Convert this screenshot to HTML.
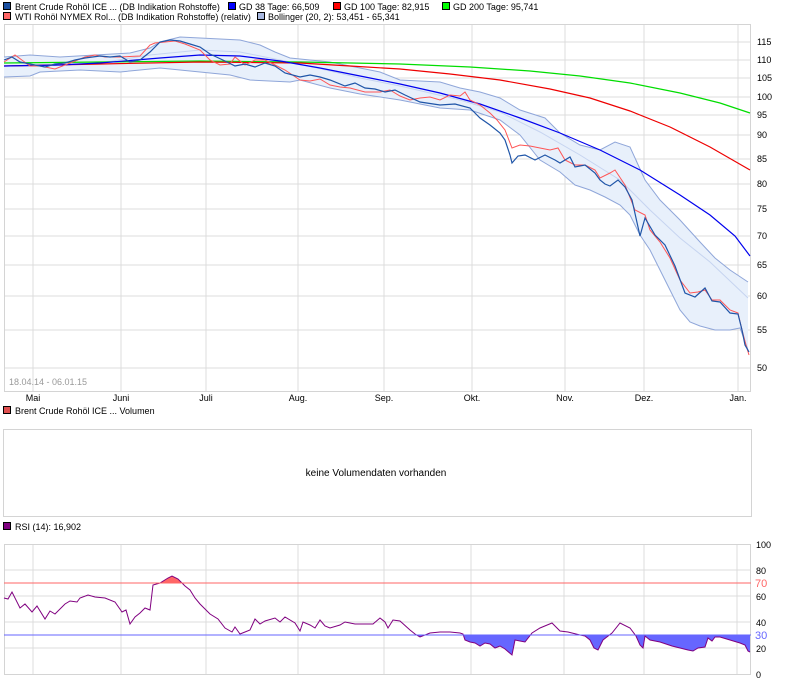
<!DOCTYPE html>
<html><head><meta charset="utf-8"><style>
body{margin:0;background:#fff;width:792px;height:684px;overflow:hidden;font-family:"Liberation Sans",sans-serif}
svg{position:absolute;left:0;top:0}
text{font-family:"Liberation Sans",sans-serif;font-size:9px;fill:#000}
</style></head><body>
<svg width="792" height="684" viewBox="0 0 792 684">
<defs>
<clipPath id="below30"><rect x="0" y="635" width="751" height="40"/></clipPath>
<clipPath id="above70"><rect x="0" y="540" width="751" height="43"/></clipPath>
</defs>
<rect x="3.5" y="2.5" width="7" height="7" fill="#1a4fa0" stroke="#000" stroke-width="1"/>
<text x="15" y="10">Brent Crude Rohöl ICE ... (DB Indikation Rohstoffe)</text>
<rect x="228.5" y="2.5" width="7" height="7" fill="#0000ff" stroke="#000"/>
<text x="239" y="10">GD 38 Tage: 66,509</text>
<rect x="333.5" y="2.5" width="7" height="7" fill="#ff0000" stroke="#000"/>
<text x="344" y="10">GD 100 Tage: 82,915</text>
<rect x="442.5" y="2.5" width="7" height="7" fill="#00ff00" stroke="#000"/>
<text x="453" y="10">GD 200 Tage: 95,741</text>
<rect x="3.5" y="12.5" width="7" height="7" fill="#ff6666" stroke="#000"/>
<text x="15" y="20">WTI Rohöl NYMEX Rol... (DB Indikation Rohstoffe) (relativ)</text>
<rect x="257.5" y="12.5" width="7" height="7" fill="#a8b8e0" stroke="#000"/>
<text x="268" y="20">Bollinger (20, 2): 53,451 - 65,341</text>

<g stroke="#dcdcdc" stroke-width="1">
<line x1="4" y1="42" x2="751" y2="42"/><line x1="4" y1="60" x2="751" y2="60"/><line x1="4" y1="78" x2="751" y2="78"/><line x1="4" y1="97" x2="751" y2="97"/><line x1="4" y1="115" x2="751" y2="115"/><line x1="4" y1="135" x2="751" y2="135"/><line x1="4" y1="159" x2="751" y2="159"/><line x1="4" y1="184" x2="751" y2="184"/><line x1="4" y1="209" x2="751" y2="209"/><line x1="4" y1="236" x2="751" y2="236"/><line x1="4" y1="265" x2="751" y2="265"/><line x1="4" y1="296" x2="751" y2="296"/><line x1="4" y1="330" x2="751" y2="330"/><line x1="4" y1="368" x2="751" y2="368"/>
<line x1="33" y1="24" x2="33" y2="391"/><line x1="121" y1="24" x2="121" y2="391"/><line x1="206" y1="24" x2="206" y2="391"/><line x1="298" y1="24" x2="298" y2="391"/><line x1="384" y1="24" x2="384" y2="391"/><line x1="472" y1="24" x2="472" y2="391"/><line x1="565" y1="24" x2="565" y2="391"/><line x1="644" y1="24" x2="644" y2="391"/><line x1="738" y1="24" x2="738" y2="391"/>
</g>
<rect x="4.5" y="24.5" width="746" height="367" fill="none" stroke="#d4d4d4"/>
<polygon fill="#e8f0fb" stroke="none" points="4,57 30,55 60,57 130,53 150,48 160,42 180,37 200,38 240,40 260,45 275,52 290,58 330,62 360,68 380,72 400,80 440,82 460,88 480,92 500,98 520,110 545,118 560,133 580,145 600,150 615,142 630,147 645,180 660,200 680,220 700,242 715,258 730,270 748,282 748,350 740,328 730,330 715,330 700,326 690,322 680,310 670,290 660,270 650,250 640,235 630,215 620,205 605,197 590,190 575,185 560,172 540,160 520,135 500,120 470,110 440,108 400,100 360,94 330,88 300,80 290,82 250,80 230,75 180,70 160,68 140,70 120,72 80,70 40,72 30,76 4,77"/>
<polyline fill="none" stroke="#8fa6d9" stroke-width="1" points="4,57 30,55 60,57 130,53 150,48 160,42 180,37 200,38 240,40 260,45 275,52 290,58 330,62 360,68 380,72 400,80 440,82 460,88 480,92 500,98 520,110 545,118 560,133 580,145 600,150 615,142 630,147 645,180 660,200 680,220 700,242 715,258 730,270 748,282"/>
<polyline fill="none" stroke="#8fa6d9" stroke-width="1" points="748,350 740,328 730,330 715,330 700,326 690,322 680,310 670,290 660,270 650,250 640,235 630,215 620,205 605,197 590,190 575,185 560,172 540,160 520,135 500,120 470,110 440,108 400,100 360,94 330,88 300,80 290,82 250,80 230,75 180,70 160,68 140,70 120,72 80,70 40,72 30,76 4,77"/>
<polyline fill="none" stroke="#c6d4f0" stroke-width="1" points="4,66 100,63 150,55 200,50 240,52 300,64 360,78 400,86 460,100 500,112 540,132 580,155 620,180 650,210 680,238 710,262 748,298"/>
<polyline fill="none" stroke="#00dd00" stroke-width="1.2" points="4,63 100,62 200,61 300,62 400,64 470,67 530,71 580,76 630,83 680,93 720,103 750,113"/>
<polyline fill="none" stroke="#ee0000" stroke-width="1.2" points="4,66 100,64 200,62 300,63 350,66 400,69 450,74 500,80 550,89 590,98 630,111 670,127 710,147 750,170"/>
<polyline fill="none" stroke="#0000ee" stroke-width="1.2" points="4,66 60,65 100,63 160,58 200,55 240,56 280,61 320,68 360,76 400,84 440,93 480,104 520,118 560,133 600,150 640,170 680,195 710,215 735,236 750,256"/>
<polyline fill="none" stroke="#ff5555" stroke-width="1" points="4,62 15,55 30,66 40,66 55,69 70,63 85,57 95,55 105,57 120,57 140,56 150,45 155,43 175,41 185,44 200,50 210,60 220,65 230,64 235,57 245,65 255,60 265,60 275,65 285,70 300,80 310,81 320,79 330,85 340,87 350,88 365,92 380,92 390,90 400,96 410,100 420,98 430,97 440,100 450,95 460,96 465,92 470,100 480,105 490,113 497,120 505,130 512,148 520,145 530,146 540,148 550,150 558,148 565,160 575,165 585,165 595,170 600,178 610,173 615,170 625,185 635,210 645,215 650,230 660,242 670,258 680,280 690,293 698,292 705,290 712,300 720,300 730,310 738,313 742,330 746,345 749,355"/>
<polyline fill="none" stroke="#1f55a8" stroke-width="1.2" points="4,60 12,57 20,62 35,65 45,67 55,64 65,63 75,60 85,58 100,56 110,57 120,56 130,62 140,60 150,52 160,42 170,40 180,41 190,44 200,47 210,54 225,61 235,66 245,64 255,67 265,63 275,66 285,73 300,77 310,75 320,77 330,80 345,86 355,83 365,88 375,89 385,92 395,90 405,95 420,102 440,105 455,104 470,108 480,118 490,125 500,133 505,140 510,155 512,163 518,156 525,155 535,160 545,155 555,160 560,163 570,157 575,167 585,165 595,173 600,180 605,184 610,186 618,180 625,187 632,200 640,236 645,218 655,235 665,245 675,266 685,293 695,297 705,288 712,301 720,302 730,313 738,314 742,330 745,345 749,352"/>
<text x="757" y="45">115</text><text x="757" y="63">110</text><text x="757" y="81">105</text><text x="757" y="100">100</text><text x="757" y="118">95</text><text x="757" y="138">90</text><text x="757" y="162">85</text><text x="757" y="187">80</text><text x="757" y="212">75</text><text x="757" y="239">70</text><text x="757" y="268">65</text><text x="757" y="299">60</text><text x="757" y="333">55</text><text x="757" y="371">50</text>
<text x="9" y="385" style="fill:#999">18.04.14 - 06.01.15</text>
<g text-anchor="middle"><text x="33" y="401">Mai</text><text x="121" y="401">Juni</text><text x="206" y="401">Juli</text><text x="298" y="401">Aug.</text><text x="384" y="401">Sep.</text><text x="472" y="401">Okt.</text><text x="565" y="401">Nov.</text><text x="644" y="401">Dez.</text><text x="738" y="401">Jan.</text></g>

<rect x="3.5" y="406.5" width="7" height="7" fill="#e05050" stroke="#000"/>
<text x="15" y="414">Brent Crude Rohöl ICE ... Volumen</text>
<rect x="3.5" y="429.5" width="748" height="87" fill="none" stroke="#d4d4d4"/>
<text x="376" y="476" text-anchor="middle" style="font-size:10px">keine Volumendaten vorhanden</text>

<rect x="3.5" y="522.5" width="7" height="7" fill="#800080" stroke="#000"/>
<text x="15" y="530">RSI (14): 16,902</text>
<g stroke="#dcdcdc">
<line x1="4" y1="570" x2="751" y2="570"/><line x1="4" y1="596" x2="751" y2="596"/><line x1="4" y1="622" x2="751" y2="622"/><line x1="4" y1="648" x2="751" y2="648"/>
<line x1="33" y1="544" x2="33" y2="674"/><line x1="121" y1="544" x2="121" y2="674"/><line x1="206" y1="544" x2="206" y2="674"/><line x1="298" y1="544" x2="298" y2="674"/><line x1="384" y1="544" x2="384" y2="674"/><line x1="471" y1="544" x2="471" y2="674"/><line x1="564" y1="544" x2="564" y2="674"/><line x1="644" y1="544" x2="644" y2="674"/><line x1="737" y1="544" x2="737" y2="674"/>
</g>
<rect x="4.5" y="544.5" width="746" height="130" fill="none" stroke="#d4d4d4"/>
<polygon clip-path="url(#below30)" fill="#6666ff" points="4,598 8,599 12,592 20,608 25,604 32,612 37,606 45,619 50,611 55,614 65,604 70,601 77,602 80,598 88,595 95,597 105,598 115,602 122,612 126,610 130,624 135,617 140,613 145,608 150,610 153,585 160,583 168,578 172,576 178,579 185,586 190,590 195,598 200,604 210,614 218,619 225,628 232,632 235,627 240,634 245,632 250,630 255,619 260,624 265,621 275,618 280,622 285,617 295,623 300,631 303,622 310,625 315,628 320,620 325,626 330,628 340,625 345,622 355,624 365,624 373,624 380,618 385,622 388,628 393,620 400,621 410,630 415,634 420,637 430,633 440,632 450,632 460,633 463,634 465,640 470,642 475,643 480,646 485,643 490,644 495,648 500,646 505,649 512,655 515,640 520,641 525,642 532,633 540,628 552,623 560,631 568,632 580,635 585,636 590,640 594,648 598,650 603,640 612,633 620,623 630,628 636,636 640,645 643,648 645,636 650,640 660,642 672,646 680,648 688,650 693,651 698,648 705,647 708,638 712,641 715,637 720,637 730,640 740,643 745,645 748,651 750,652 750,635 4,635"/>
<polygon clip-path="url(#above70)" fill="#ff6666" points="160,583 168,578 172,576 178,579 182,583"/>
<polyline fill="none" stroke="#800080" stroke-width="1" points="4,598 8,599 12,592 20,608 25,604 32,612 37,606 45,619 50,611 55,614 65,604 70,601 77,602 80,598 88,595 95,597 105,598 115,602 122,612 126,610 130,624 135,617 140,613 145,608 150,610 153,585 160,583 168,578 172,576 178,579 185,586 190,590 195,598 200,604 210,614 218,619 225,628 232,632 235,627 240,634 245,632 250,630 255,619 260,624 265,621 275,618 280,622 285,617 295,623 300,631 303,622 310,625 315,628 320,620 325,626 330,628 340,625 345,622 355,624 365,624 373,624 380,618 385,622 388,628 393,620 400,621 410,630 415,634 420,637 430,633 440,632 450,632 460,633 463,634 465,640 470,642 475,643 480,646 485,643 490,644 495,648 500,646 505,649 512,655 515,640 520,641 525,642 532,633 540,628 552,623 560,631 568,632 580,635 585,636 590,640 594,648 598,650 603,640 612,633 620,623 630,628 636,636 640,645 643,648 645,636 650,640 660,642 672,646 680,648 688,650 693,651 698,648 705,647 708,638 712,641 715,637 720,637 730,640 740,643 745,645 748,651 750,652"/>
<line x1="4" y1="583" x2="751" y2="583" stroke="#ff6666"/>
<line x1="4" y1="635" x2="751" y2="635" stroke="#6666ff"/>
<text x="756" y="548">100</text><text x="756" y="574">80</text><text x="755" y="587" style="fill:#ff6666;font-size:11px">70</text><text x="756" y="600">60</text><text x="756" y="626">40</text><text x="755" y="639" style="fill:#6666ff;font-size:11px">30</text><text x="756" y="652">20</text><text x="756" y="678">0</text>
</svg>
</body></html>
